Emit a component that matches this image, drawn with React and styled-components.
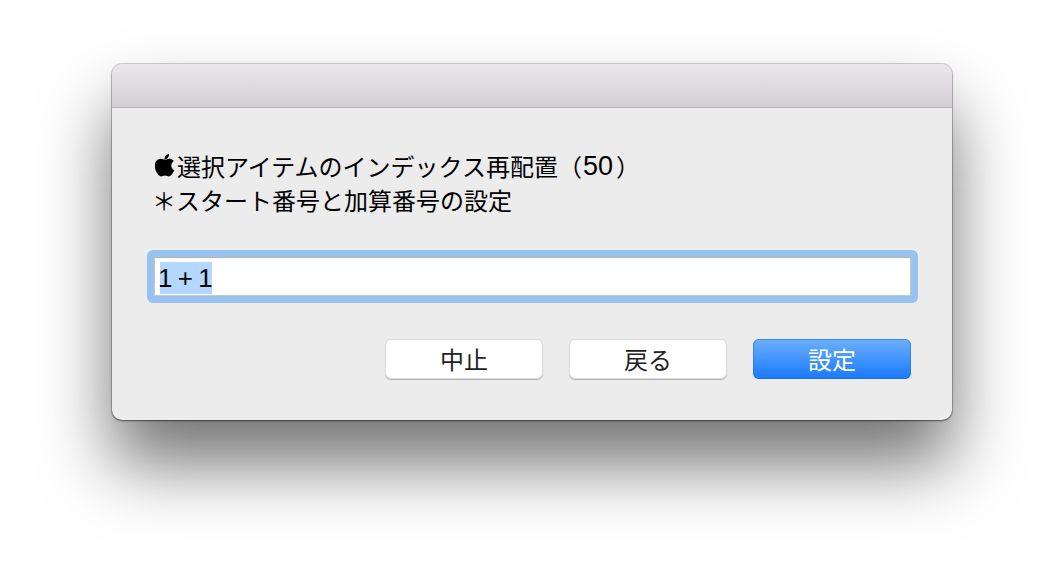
import React from 'react';
import styled, { createGlobalStyle } from 'styled-components';

const GlobalStyle = createGlobalStyle`
  html, body {
    margin: 0;
    padding: 0;
    background: #fff;
  }
  body {
    font-family: "Noto Sans CJK JP", "Liberation Sans", sans-serif;
  }
`;

const Page = styled.div`
  width: 1064px;
  height: 580px;
  box-sizing: border-box;
  padding: 64px 112px 0;
  overflow: hidden;
`;

const Dialog = styled.div`
  width: 840px;
  height: 356px;
  display: flex;
  flex-direction: column;
  background: #ececec;
  border-radius: 10px;
  box-shadow: 0 0 0 1px rgba(0, 0, 0, 0.16), 0 1px 2px rgba(0, 0, 0, 0.45),
    0 44px 70px rgba(0, 0, 0, 0.55);
  overflow: hidden;
`;

const TitleBar = styled.div`
  height: 43px;
  flex: none;
  background: linear-gradient(#e9e7e9, #d2d0d2);
  border-bottom: 1px solid #b1afb1;
`;

const Body = styled.div`
  flex: 1;
  display: flex;
  flex-direction: column;
  padding: 41px 34px 0 35px;
`;

const Message = styled.div`
  padding-left: 6px;
  font-size: 24px;
  line-height: 34px;
  color: #000;
`;

const Line = styled.div`
  display: flex;
  align-items: center;
  height: 34px;
  white-space: nowrap;
`;

const NoteLine = styled(Line)`
  margin-left: -1px;
`;

const Digits = styled.span`
  margin: 0 3px 0 1px;
  font-family: "Liberation Sans", sans-serif;
  font-size: 27px;
`;

const AppleMark = styled.svg`
  width: 20px;
  height: 24px;
  flex: none;
  margin: -3px 2px 0 2px;
  fill: #000;
`;

const FieldRing = styled.div`
  margin-top: 33px;
  height: 53px;
  box-sizing: border-box;
  padding: 7px;
  background: #98c3f0;
  border-radius: 6px;
`;

const Field = styled.div`
  height: 39px;
  box-sizing: border-box;
  display: flex;
  align-items: center;
  padding-left: 5px;
  background: #fff;
  border: 1px solid #c8c6c6;
  border-top-color: #b4b4b4;
`;

const Selected = styled.span`
  display: block;
  width: 52px;
  height: 32px;
  margin-top: 3px;
  background: #b3d7ff;
  font-family: "Liberation Sans", sans-serif;
  font-size: 26px;
  letter-spacing: -1.2px;
  word-spacing: 0.5px;
  text-indent: -2px;
  line-height: 33px;
  color: #000;
  white-space: pre;
`;

const Buttons = styled.div`
  margin-top: 36px;
  display: flex;
  justify-content: flex-end;
  gap: 26px;
  padding-right: 7px;
`;

const Button = styled.div`
  width: 158px;
  height: 40px;
  box-sizing: border-box;
  display: flex;
  align-items: center;
  justify-content: center;
  padding-bottom: 2px;
  border-radius: 6px;
  font-size: 24px;
  color: ${(p) => (p.$primary ? '#fff' : '#222')};
  background: ${(p) => (p.$primary ? 'linear-gradient(#6cb0fb, #1a78fd)' : '#fff')};
  box-shadow: ${(p) => (p.$primary
    ? 'inset 0 0 0 1px rgba(20, 110, 230, 0.55)'
    : 'inset 0 0 0 1px rgba(0, 0, 0, 0.13), 0 1px 1px rgba(0, 0, 0, 0.25)')};
`;

function Apple() {
  return (
    <AppleMark viewBox="0 0 20 24">
      <path d="M14.1 1c.1 1.6-.5 2.8-1.3 3.8-.9 1-2 1.700-3.300 1.600-.2-1.500.5-2.900 1.300-3.800C11.700 1.700 13 1 14.100 1z" />
      <path d="M19.300 17.300c-.5 1.200-.8 1.700-1.500 2.800-1 1.500-2.300 3.300-3.900 3.300-1.500 0-1.900-.9-3.900-.9s-2.500.9-4 .9c-1.700 0-2.900-1.600-3.900-3.100C-.6 16.100-.9 11.200.8 8.600c1.200-1.900 3.100-2.900 4.900-2.900s3 1 4.500 1c1.400 0 2.300-1 4.400-1 1.600 0 3.300.9 4.400 2.400-3.900 2.100-3.300 7.700.3 9.200z" />
    </AppleMark>
  );
}

export default function App() {
  return (
    <Page>
      <GlobalStyle />
      <Dialog>
        <TitleBar />
        <Body>
          <Message>
            <Line>
              <Apple />
              選択アイテムのインデックス再配置（
              <Digits>50</Digits>
              ）
            </Line>
            <NoteLine>＊スタート番号と加算番号の設定</NoteLine>
          </Message>
          <FieldRing>
            <Field>
              <Selected>1 + 1</Selected>
            </Field>
          </FieldRing>
          <Buttons>
            <Button>中止</Button>
            <Button>戻る</Button>
            <Button $primary>設定</Button>
          </Buttons>
        </Body>
      </Dialog>
    </Page>
  );
}
